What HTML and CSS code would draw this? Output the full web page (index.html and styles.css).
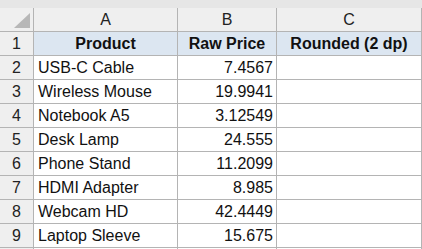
FILE: index.html
```html
<!DOCTYPE html>
<html>
<head>
<meta charset="utf-8">
<link rel="stylesheet" href="styles.css">
</head>
<body>
<div class="topbar"></div>
<div class="sheet">
  <div class="corner"><span class="tri"></span></div>
  <div class="colhead">A</div>
  <div class="colhead">B</div>
  <div class="colhead">C</div>

  <div class="rowhead">1</div>
  <div class="cell hdr">Product</div>
  <div class="cell hdr">Raw Price</div>
  <div class="cell hdr">Rounded (2 dp)</div>

  <div class="rowhead">2</div>
  <div class="cell">USB-C Cable</div>
  <div class="cell num">7.4567</div>
  <div class="cell"></div>

  <div class="rowhead">3</div>
  <div class="cell">Wireless Mouse</div>
  <div class="cell num">19.9941</div>
  <div class="cell"></div>

  <div class="rowhead">4</div>
  <div class="cell">Notebook A5</div>
  <div class="cell num">3.12549</div>
  <div class="cell"></div>

  <div class="rowhead">5</div>
  <div class="cell">Desk Lamp</div>
  <div class="cell num">24.555</div>
  <div class="cell"></div>

  <div class="rowhead">6</div>
  <div class="cell">Phone Stand</div>
  <div class="cell num">11.2099</div>
  <div class="cell"></div>

  <div class="rowhead">7</div>
  <div class="cell">HDMI Adapter</div>
  <div class="cell num">8.985</div>
  <div class="cell"></div>

  <div class="rowhead">8</div>
  <div class="cell">Webcam HD</div>
  <div class="cell num">42.4449</div>
  <div class="cell"></div>

  <div class="rowhead">9</div>
  <div class="cell">Laptop Sleeve</div>
  <div class="cell num">15.675</div>
  <div class="cell"></div>

  <div class="rowhead stub"></div>
  <div class="cell stub"></div>
  <div class="cell stub"></div>
  <div class="cell stub"></div>
</div>
</body>
</html>
```

FILE: styles.css
```css
html, body {
  margin: 0;
  padding: 0;
  overflow: hidden;
  background: #ffffff;
}
body {
  font-family: "Liberation Sans", Arial, sans-serif;
  font-size: 16px;
  color: #111111;
}
.topbar {
  height: 8px;
  background: #e6e6e6;
}
.sheet {
  display: grid;
  grid-template-columns: 33px 143px 98px 144px;
  grid-template-rows: repeat(10, 23px) 1px;
  column-gap: 1px;
  row-gap: 1px;
  background: #b4b4b4;
  width: 422px;
  padding-right: 1px;
  box-sizing: border-box;
}
.corner {
  background: #efefef;
  position: relative;
}
.tri {
  position: absolute;
  left: 14px;
  top: 5px;
  width: 0;
  height: 0;
  border-style: solid;
  border-width: 0 0 15px 16px;
  border-color: transparent transparent #b7b7b7 transparent;
}
.colhead {
  background: #efefef;
  display: flex;
  align-items: center;
  justify-content: center;
  color: #222222;
}
.rowhead {
  background: #efefef;
  display: flex;
  align-items: center;
  justify-content: center;
  color: #222222;
}
.cell {
  background: #ffffff;
  display: flex;
  align-items: center;
  padding: 0 4px;
  white-space: nowrap;
  overflow: hidden;
}
.hdr {
  background: #dce6f1;
  font-weight: bold;
  justify-content: center;
}
.num {
  justify-content: flex-end;
  padding-right: 3px;
}
.stub {
  min-height: 0;
  padding: 0;
}
```
